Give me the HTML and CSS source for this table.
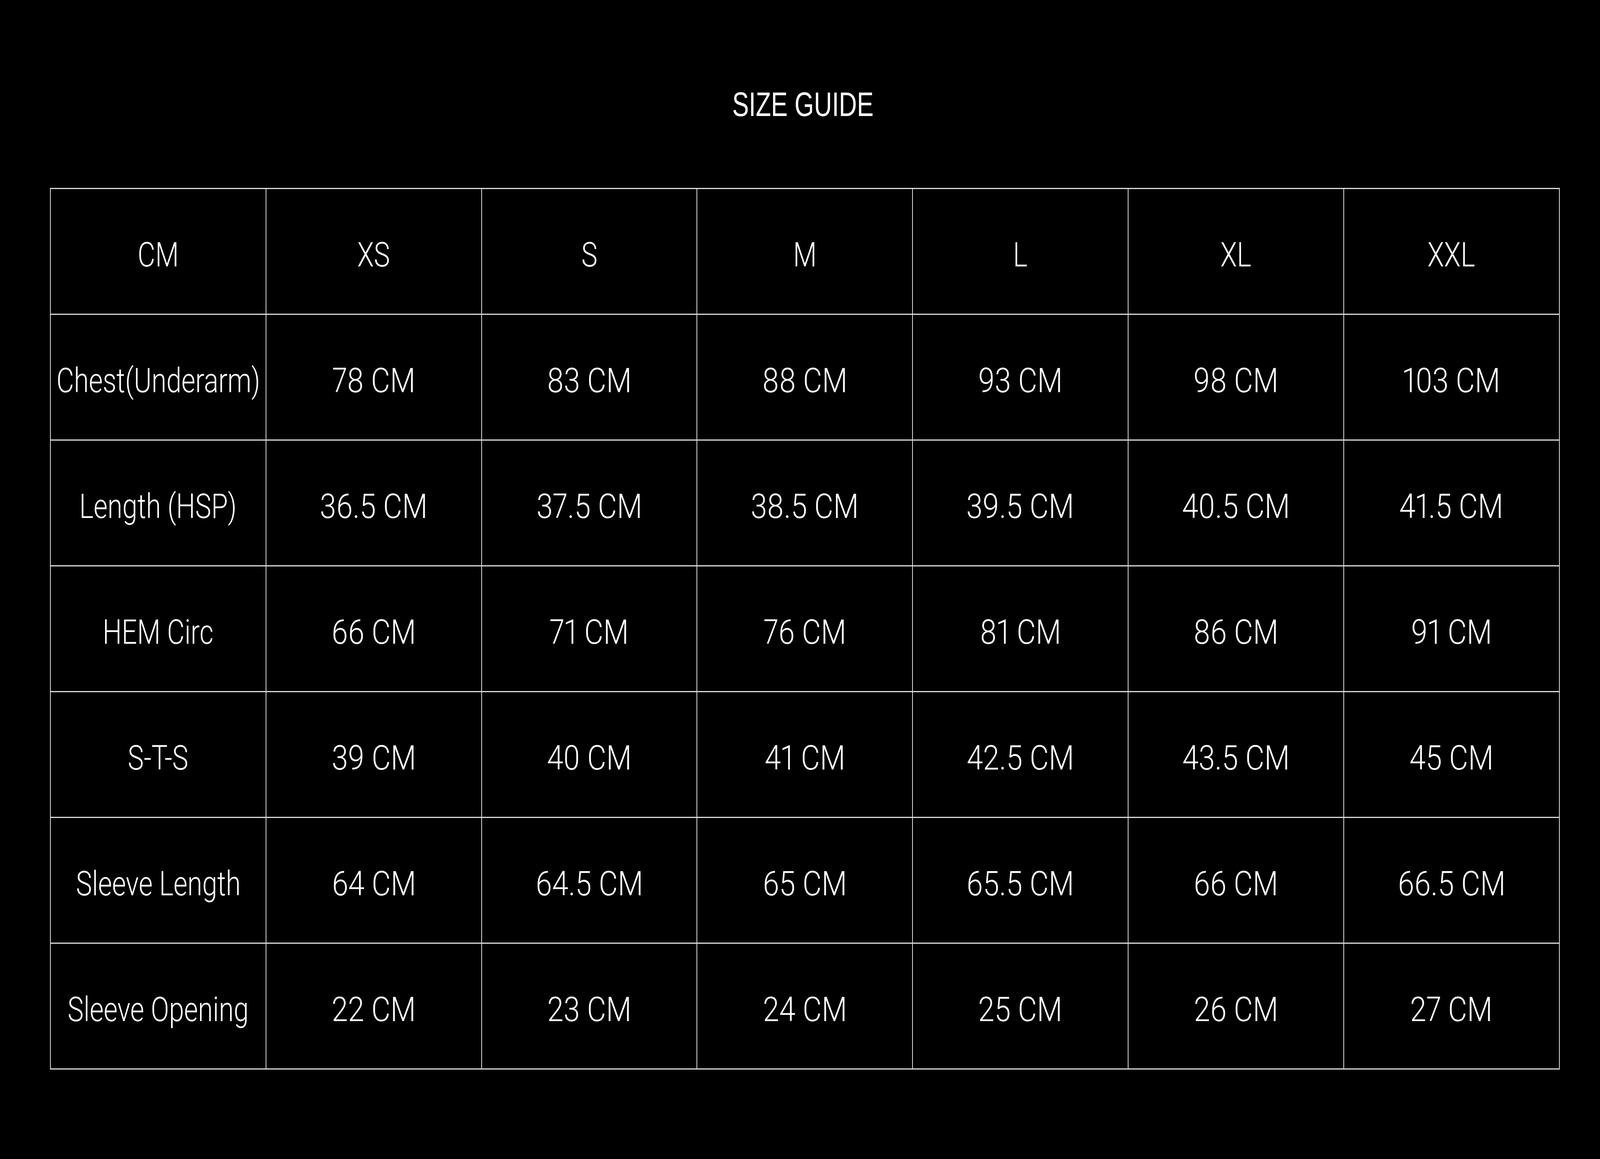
FILE: index.html
```html
<!DOCTYPE html>
<html lang="en">
<head>
<meta charset="utf-8">
<title>Size Guide</title>
<link rel="stylesheet" href="styles.css">
</head>
<body>
<main class="guide">
  <h1 class="title"><span class="title-text">SIZE GUIDE</span></h1>
  <table class="size-table">
    <thead>
      <tr>
        <th class="head"><span class="t">CM</span></th>
        <th class="head"><span class="t">XS</span></th>
        <th class="head"><span class="t">S</span></th>
        <th class="head"><span class="t">M</span></th>
        <th class="head"><span class="t">L</span></th>
        <th class="head"><span class="t">XL</span></th>
        <th class="head"><span class="t">XXL</span></th>
      </tr>
    </thead>
    <tbody>
      <tr>
        <th class="label" scope="row"><span class="t">Chest(Underarm)</span></th>
        <td class="val"><span class="t">78 CM</span></td>
        <td class="val"><span class="t">83 CM</span></td>
        <td class="val"><span class="t">88 CM</span></td>
        <td class="val"><span class="t">93 CM</span></td>
        <td class="val"><span class="t">98 CM</span></td>
        <td class="val"><span class="t">103 CM</span></td>
      </tr>
      <tr>
        <th class="label" scope="row"><span class="t">Length (HSP)</span></th>
        <td class="val"><span class="t">36.5 CM</span></td>
        <td class="val"><span class="t">37.5 CM</span></td>
        <td class="val"><span class="t">38.5 CM</span></td>
        <td class="val"><span class="t">39.5 CM</span></td>
        <td class="val"><span class="t">40.5 CM</span></td>
        <td class="val"><span class="t">41.5 CM</span></td>
      </tr>
      <tr>
        <th class="label" scope="row"><span class="t">HEM Circ</span></th>
        <td class="val"><span class="t">66 CM</span></td>
        <td class="val"><span class="t">71 CM</span></td>
        <td class="val"><span class="t">76 CM</span></td>
        <td class="val"><span class="t">81 CM</span></td>
        <td class="val"><span class="t">86 CM</span></td>
        <td class="val"><span class="t">91 CM</span></td>
      </tr>
      <tr>
        <th class="label" scope="row"><span class="t">S-T-S</span></th>
        <td class="val"><span class="t">39 CM</span></td>
        <td class="val"><span class="t">40 CM</span></td>
        <td class="val"><span class="t">41 CM</span></td>
        <td class="val"><span class="t">42.5 CM</span></td>
        <td class="val"><span class="t">43.5 CM</span></td>
        <td class="val"><span class="t">45 CM</span></td>
      </tr>
      <tr>
        <th class="label" scope="row"><span class="t">Sleeve Length</span></th>
        <td class="val"><span class="t">64 CM</span></td>
        <td class="val"><span class="t">64.5 CM</span></td>
        <td class="val"><span class="t">65 CM</span></td>
        <td class="val"><span class="t">65.5 CM</span></td>
        <td class="val"><span class="t">66 CM</span></td>
        <td class="val"><span class="t">66.5 CM</span></td>
      </tr>
      <tr>
        <th class="label" scope="row"><span class="t">Sleeve Opening</span></th>
        <td class="val"><span class="t">22 CM</span></td>
        <td class="val"><span class="t">23 CM</span></td>
        <td class="val"><span class="t">24 CM</span></td>
        <td class="val"><span class="t">25 CM</span></td>
        <td class="val"><span class="t">26 CM</span></td>
        <td class="val"><span class="t">27 CM</span></td>
      </tr>
    </tbody>
  </table>
</main>
</body>
</html>
```
FILE: styles.css
```css
:root {
  /* horizontal text stretch relative to a 7166px-wide layout */
  --sx: 1;
}

@media (max-width: 6000px) {
  :root {
    --sx: 0.5716;
  }
}

html, body {
  margin: 0;
  padding: 0;
  background: #000;
  color: #fff;
}

.guide {
  padding: 224px 0 0 3.126vw;
  width: 94.35vw;
}

.title {
  margin: 0 0 170px;
  padding-right: 0.25vw;
  font-family: "Liberation Sans", Arial, sans-serif;
  font-weight: 400;
  font-size: 86.6px;
  line-height: 1;
  text-align: center;
  color: #fff;
}

.title-text {
  display: inline-block;
  transform: scaleX(calc(1.29 * var(--sx)));
}

.size-table {
  width: 100%;
  table-layout: fixed;
  border-collapse: separate;
  border-spacing: max(2px, 0.042vw) 3px;
  background: #dcdcdc;
}

.size-table tr {
  height: 319px;
}

.size-table th,
.size-table td {
  padding: 18px 0 0 0;
  background: #000;
  color: #fff;
  text-align: center;
  vertical-align: middle;
  white-space: nowrap;
  font-family: Roboto, "Liberation Sans", sans-serif;
  font-weight: 300;
  font-size: 87px;
  line-height: normal;
  font-variant-numeric: proportional-nums;
}

/* negative side margins keep wide (pre-stretch) text centred in its cell */
.t {
  display: inline-block;
  margin: 0 -1.2em;
}

.head .t {
  transform: scaleX(calc(1.4 * var(--sx)));
}

.label .t {
  transform: scaleX(calc(1.39 * var(--sx)));
}

.val .t {
  transform: scaleX(calc(1.51 * var(--sx)));
}
```
